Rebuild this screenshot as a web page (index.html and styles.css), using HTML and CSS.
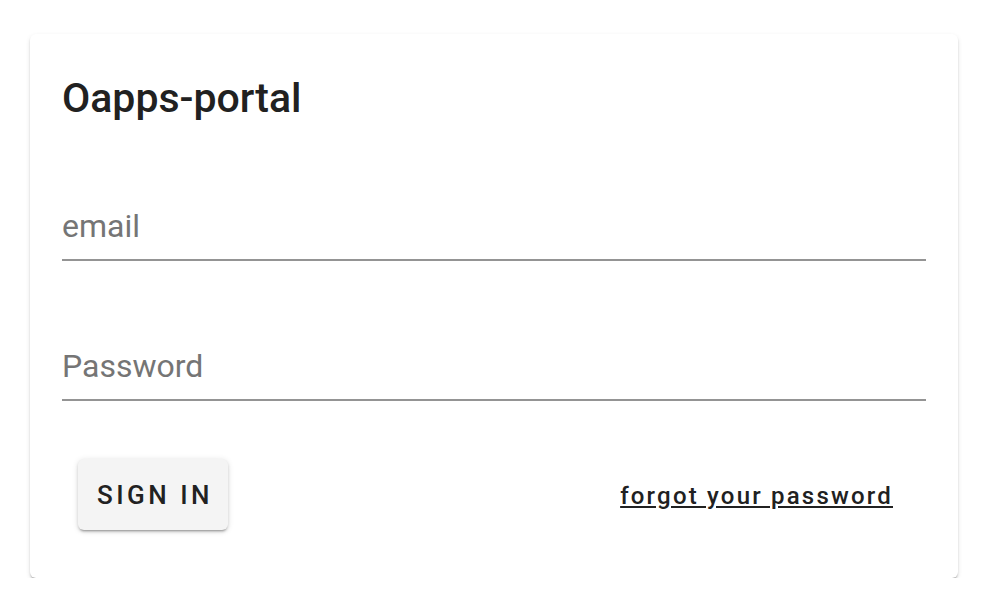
FILE: index.html
```html
<!DOCTYPE html>
<html lang="en">
<head>
  <meta charset="UTF-8" />
  <title>Oapps-portal</title>
  <link rel="stylesheet" href="styles.css">
</head>
<body>
  <div class="card">
    <h1>Oapps-portal</h1>
    <div class="field">
      <input type="email" placeholder="email" />
    </div>
    <div class="field">
      <input type="password" placeholder="Password" />
    </div>
    <div class="actions">
      <button class="signin">Sign in</button>
      <a href="#" class="forgot">forgot your password</a>
    </div>
  </div>
</body>
</html>
```

FILE: styles.css
```css
body {
  margin: 0;
  background: #fff;
  font-family: Roboto, 'Liberation Sans', sans-serif;
  color: #212121;
}
.card {
  box-sizing: border-box;
  width: 928px;
  margin: 34px 0 0 30px;
  padding: 41px 32px 48px 32px;
  background: #fff;
  border-radius: 6px;
  box-shadow: 0 3px 2px -2px rgba(0,0,0,.22), 0 2px 2px rgba(0,0,0,.14), 0 2px 5px rgba(0,0,0,.1);
}
h1 {
  margin: 0;
  font-size: 41px;
  line-height: 46px;
  font-weight: 500;
  color: #212121;
}
.field {
  margin-top: 80px;
}
.field input {
  display: block;
  box-sizing: content-box;
  width: 100%;
  margin: 0;
  padding: 7px 0 15px 0;
  height: 36px;
  font-family: inherit;
  font-size: 32px;
  line-height: 36px;
  color: #212121;
  border: none;
  border-bottom: 2px solid #949494;
  outline: none;
  background: transparent;
}
.field input::placeholder {
  color: #757575;
  opacity: 1;
}
.actions {
  display: flex;
  justify-content: space-between;
  align-items: baseline;
  margin-top: 58px;
  padding: 0 33px 0 16px;
}
.signin {
  display: inline-flex;
  align-items: center;
  height: 71px;
  padding: 0 15px 0 19px;
  border: none;
  border-radius: 6px;
  background: #f4f4f4;
  font-family: inherit;
  font-size: 26px;
  font-weight: 500;
  letter-spacing: 3.5px;
  text-transform: uppercase;
  color: #212121;
  box-shadow: 0 3px 2px -2px rgba(0,0,0,.25), 0 2px 3px rgba(0,0,0,.14), 0 1px 6px rgba(0,0,0,.12);
  cursor: pointer;
}
.forgot {
  font-size: 24px;
  font-weight: 500;
  letter-spacing: 2.2px;
  color: #212121;
  text-decoration: underline;
}
```
